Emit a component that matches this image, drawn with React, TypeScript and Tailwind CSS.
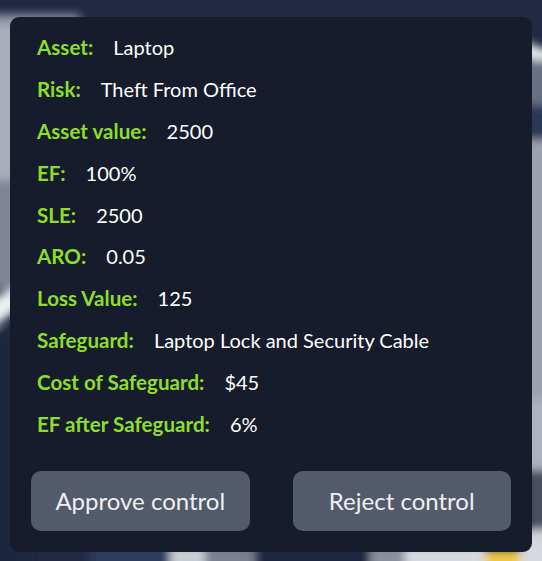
import React from "react";

const rows: [string, string][] = [
  ["Asset:", "Laptop"],
  ["Risk:", "Theft From Office"],
  ["Asset value:", "2500"],
  ["EF:", "100%"],
  ["SLE:", "2500"],
  ["ARO:", "0.05"],
  ["Loss Value:", "125"],
  ["Safeguard:", "Laptop Lock and Security Cable"],
  ["Cost of Safeguard:", "$45"],
  ["EF after Safeguard:", "6%"],
];

function Backdrop() {
  return (
    <svg
      className="absolute inset-0 h-full w-full"
      viewBox="0 0 542 561"
      preserveAspectRatio="none"
    >
      <defs>
        <filter id="b" x="-20%" y="-20%" width="140%" height="140%">
          <feGaussianBlur stdDeviation="4" />
        </filter>
      </defs>
      <rect x="0" y="0" width="542" height="561" fill="#212a42" />
      <g filter="url(#b)">
        <rect x="-10" y="14" width="90" height="10" fill="#8a90a0" />
        <rect x="-10" y="24" width="40" height="160" fill="#a8adb9" />
        <rect x="-10" y="180" width="40" height="110" fill="#7e8596" />
        <polygon points="-10,300 30,280 30,300 -10,330" fill="#eceef2" />
        <rect x="-10" y="330" width="40" height="240" fill="#1e263c" />
        <polygon points="520,40 560,55 560,70 520,55" fill="#e8eaee" />
        <rect x="520" y="60" width="40" height="50" fill="#687186" />
        <rect x="520" y="105" width="40" height="35" fill="#2a3958" />
        <rect x="520" y="140" width="40" height="260" fill="#9da2b0" />
        <rect x="520" y="400" width="40" height="70" fill="#aeb2bd" />
        <rect x="528" y="470" width="40" height="60" fill="#4a5060" />
        <rect x="520" y="530" width="40" height="40" fill="#d2d5da" />
        <rect x="90" y="545" width="80" height="30" fill="#2a3c5c" />
        <rect x="170" y="545" width="35" height="30" fill="#c8ccd3" />
        <rect x="205" y="545" width="50" height="30" fill="#7a8090" />
        <rect x="255" y="545" width="115" height="30" fill="#1f2740" />
        <rect x="370" y="545" width="35" height="30" fill="#8a8f9c" />
        <rect x="405" y="545" width="80" height="30" fill="#d6d9de" />
        <rect x="485" y="550" width="35" height="20" fill="#f2c744" />
        <rect x="520" y="545" width="40" height="30" fill="#d6d9de" />
      </g>
    </svg>
  );
}

export default function App() {
  return (
    <div
      className="relative h-[561px] w-[542px] overflow-hidden"
      style={{ fontFamily: "Lato, 'Noto Sans', sans-serif" }}
    >
      <Backdrop />
      <div className="relative ml-[10px] mt-[17px] flex w-[522px] flex-col rounded-[9px] bg-[#161c2b] px-[21px] pb-[21px] pt-[10px]">
        <div className="flex flex-col pl-[6px]">
          {rows.map(([k, v]) => (
            <div key={k} className="flex h-[41.9px] items-baseline gap-[20px] leading-[41.9px]">
              <span className="text-[20.6px] font-bold text-[#8dde2a]">{k}</span>
              <span className="text-[20px] text-white">{v}</span>
            </div>
          ))}
        </div>
        <div className="mt-[25px] flex gap-[43px]">
          <button className="h-[60px] flex-1 rounded-[10px] bg-[#535a69] pt-[1px] text-[24px] text-[#eef0f3]">
            Approve control
          </button>
          <button className="h-[60px] flex-1 rounded-[10px] bg-[#535a69] pt-[1px] text-[24px] text-[#eef0f3]">
            Reject control
          </button>
        </div>
      </div>
    </div>
  );
}
